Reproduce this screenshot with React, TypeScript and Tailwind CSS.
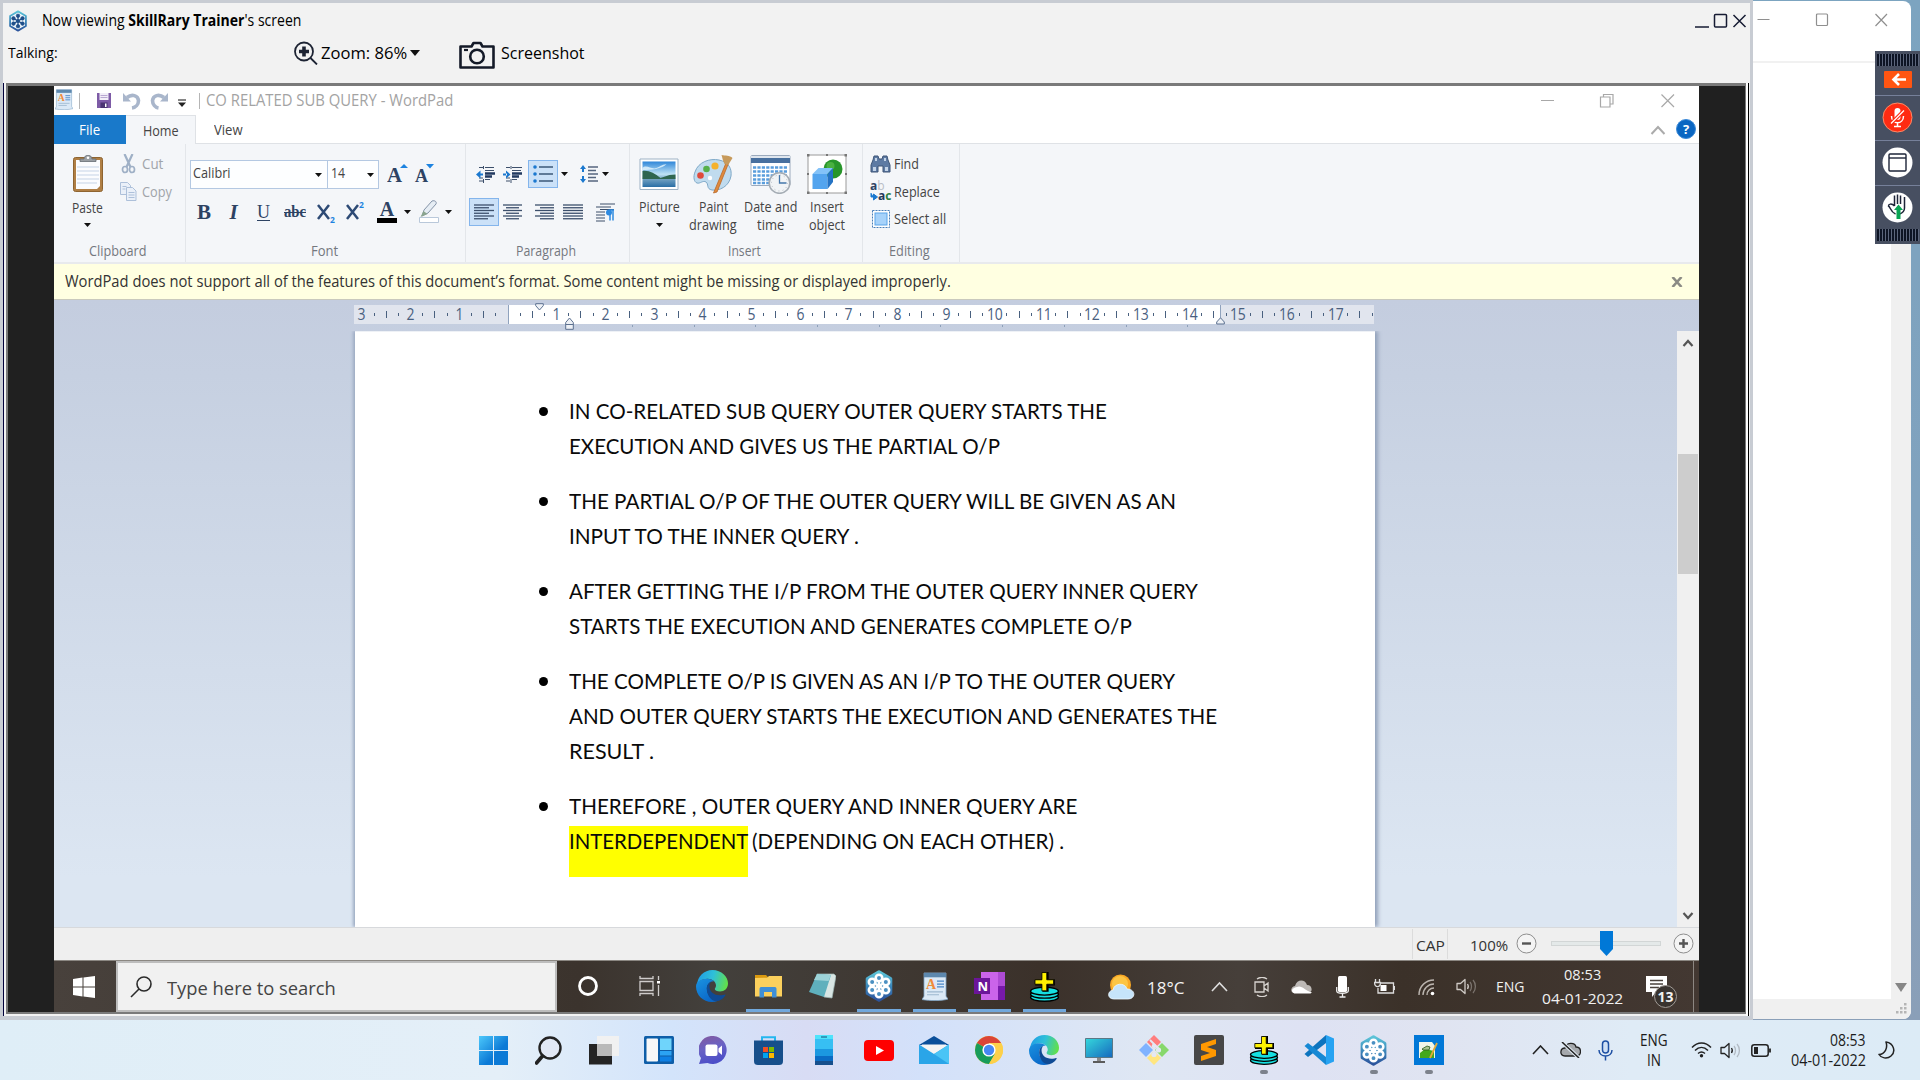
import React, { useLayoutEffect, useRef, useState } from "react";

type FitProps = { w: number; className?: string; children: React.ReactNode };

/* Single-line text squeezed or stretched to an exact width. */
function Fit({ w, className = "", children }: FitProps) {
  const ref = useRef<HTMLSpanElement>(null);
  const [s, setS] = useState(1);
  useLayoutEffect(() => {
    if (ref.current) setS(w / ref.current.offsetWidth);
  }, [w]);
  return (
    <span className={"block shrink-0 whitespace-nowrap text-left " + className} style={{ width: w }}>
      <span ref={ref} className="inline-block origin-left" style={{ transform: `scaleX(${s})` }}>
        {children}
      </span>
    </span>
  );
}

function Caret({ className = "" }: { className?: string }) {
  return (
    <svg className={"shrink-0 " + className} width="7" height="4" viewBox="0 0 7 4">
      <path d="M0 0h7L3.5 4z" fill="#111" />
    </svg>
  );
}

function Flower({ size, white = false }: { size: number; white?: boolean }) {
  const d = white ? 7.6 : 7.9;
  const pts = [0, 60, 120, 180, 240, 300].map((a) => {
    const r = ((a - 90) * Math.PI) / 180;
    return [16 + d * Math.cos(r), 16 + d * Math.sin(r)];
  });
  return (
    <svg width={size} height={size} viewBox="0 0 32 32" className="shrink-0">
      <defs>
        <linearGradient id="flw" x1="0" y1="0" x2="0" y2="1">
          <stop offset="0" stopColor="#5cc4d8" />
          <stop offset="0.55" stopColor="#3a83b8" />
          <stop offset="1" stopColor="#2c549c" />
        </linearGradient>
      </defs>
      <path d="M16 2 27.500 8.700v14.600L16 30 4.500 23.300V8.700z" fill={white ? "#f4fafd" : "url(#flw)"} stroke="url(#flw)" strokeWidth={white ? 2.6 : 3.6} strokeLinejoin="round" />
      {pts.map((p, i) => (
        <g key={i}>
          <path d={`M16 16L${p[0]} ${p[1]}`} stroke={white ? "#1f4f8a" : "#fff"} strokeWidth={white ? 1.8 : 2.2} />
          <circle cx={p[0]} cy={p[1]} r={white ? 2.6 : 3.3} fill={white ? "#1f4f8a" : "#4a90c2"} stroke={white ? "#1f4f8a" : "#fff"} strokeWidth={white ? 1 : 2.6} />
        </g>
      ))}
      <circle cx="16" cy="16" r="2.8" fill={white ? "#1f4f8a" : "#fff"} />
    </svg>
  );
}

function Edge({ size }: { size: number }) {
  return (
    <svg width={size} height={size} viewBox="0 0 32 32" className="shrink-0">
      <defs>
        <linearGradient id="eg1" x1="0" y1="0.3" x2="1" y2="0.5">
          <stop offset="0" stopColor="#1f9de6" />
          <stop offset="0.5" stopColor="#2fc0d8" />
          <stop offset="1" stopColor="#62e04a" />
        </linearGradient>
        <linearGradient id="eg2" x1="0" y1="0" x2="0.6" y2="1">
          <stop offset="0" stopColor="#1a93e0" />
          <stop offset="1" stopColor="#0a67c8" />
        </linearGradient>
      </defs>
      <path d="M1 15C1.500 6.500 8 0 16.500 0 25.500 0 32 6.500 32 13.500c0 5-3.700 8-8 8-3 0-5.200-1-5.200-2.400 0-1 1.200-1.600 1.200-3.600 0-3.600-3.500-6.800-8.500-6.800C6.500 8.700 2.200 11.500 1 15z" fill="url(#eg1)" />
      <path d="M0 16.500C0 11.500 5 8.700 11 8.700c3 0 5.500 1.200 7 2.600-4-.3-7.200 3.200-7.200 7.200 0 6.500 5.200 11.500 10.500 12.500C19.800 31.700 18 32 16 32 7 32 0 25 0 16.500z" fill="url(#eg2)" />
      <path d="M10.800 18.500c0-3.500 2-6.200 4.600-7-1.400 1.400-2 3-2 5 0 5 4.600 8.800 10.400 8.800 2.600 0 4.200-.8 5-.9.7 0 .9.500.5 1.100-1.800 2.700-4.800 5.600-9.300 5.800-5.600-.6-9.200-6.800-9.200-12.800z" fill="#0f4a94" />
    </svg>
  );
}

/* Yellow cross resting on stacked cyan discs. */
function PlusStack({ size }: { size: number }) {
  return (
    <svg width={size} height={size} viewBox="0 0 30 30" className="shrink-0">
      {[25.500, 22.500, 19.500].map((y) => (
        <ellipse key={y} cx="15" cy={y} rx="13.500" ry="3.800" fill="#16dfe0" stroke="#000" strokeWidth="1.300" />
      ))}
      <path d="M13 1h6v7h6v6h-6v6h-6v-6H6V8h7z" fill="#000" />
      <path d="M12.500 1.500h4.700v7h6.600v4.300h-6.600v6.400h-4.700v-6.400H5.800V8.500h6.700z" fill="#fff200" stroke="#000" strokeWidth="0.800" />
    </svg>
  );
}

function WordPadIcon({ w, h }: { w: number; h: number }) {
  return (
    <svg width={w} height={h} viewBox="0 0 26 30" preserveAspectRatio="none" className="shrink-0">
      <path d="M2 1h22v24l2 3c-6 2-18 2-26 .5L2 25z" fill="#dbe9f6" stroke="#7fa5c6" strokeWidth="0.800" />
      <path d="M2 1h22v4.500H2z" fill="#5d88ae" />
      <text x="4" y="17.500" fontFamily="Liberation Serif" fontWeight="bold" fontSize="14" fill="#f08c3a">A</text>
      <path d="M15 9.500h7M15 12.500h7M15 15.500h7" stroke="#4a86c8" strokeWidth="1.300" />
      <path d="M5 20.500h16M5 23.500h12" stroke="#9db8d0" strokeWidth="1.200" />
    </svg>
  );
}

function Speaker({ color, faint }: { color: string; faint: string }) {
  return (
    <svg width="21" height="17" viewBox="0 0 21 17" fill="none" strokeWidth="1.300" className="shrink-0">
      <path d="M1 5.500v6h3.500L9 15.500v-14L4.500 5.500z" stroke={color} strokeLinejoin="round" />
      <path d="M11.500 6c1 1.500 1 3.500 0 5" stroke={color} />
      <path d="M14 4c2 2.500 2 6.500 0 9M17 2c3.200 3.500 3.200 9.500 0 13" stroke={faint} />
    </svg>
  );
}

function Lines({ rows, w = 20 }: { rows: [number, number][]; w?: number }) {
  return (
    <svg width={w} height="16" viewBox={`0 0 ${w} 16`} className="shrink-0">
      {rows.map(([a, b], i) => (
        <path key={i} d={`M${a} ${1 + i * 2.750}H${b}`} stroke="#3c4f6b" strokeWidth="1.300" />
      ))}
    </svg>
  );
}

function Group({ className, label, labelW, children }: { className: string; label: string; labelW: number; children: React.ReactNode }) {
  return (
    <div className={"flex flex-col shrink-0 h-[118px] " + className}>
      <div className="h-[96px] shrink-0">{children}</div>
      <div className="h-5 flex items-center justify-center pr-[3px] text-[14px] text-[#74787f]">
        <Fit w={labelW}>{label}</Fit>
      </div>
    </div>
  );
}

function SharedHeader() {
  return (
    <div className="h-[80px] shrink-0 bg-[#f2f2f2] flex text-black">
      <div className="w-[1626px] shrink-0 flex flex-col">
        <div className="h-[36px] flex items-center pl-[4px]">
          <Flower size={22} white />
          <Fit w={259} className="ml-[13px] text-[15.500px]">
            Now viewing <b>SkillRary Trainer</b>'s screen
          </Fit>
        </div>
        <div className="h-[28px] flex items-center pl-[5px]">
          <Fit w={50} className="text-[14.500px]">Talking:</Fit>
          <svg width="24" height="24" viewBox="0 0 24 24" className="ml-[236px] shrink-0" fill="none" stroke="#1d2333">
            <circle cx="10" cy="10.500" r="9" strokeWidth="1.800" />
            <path d="M10 5.500v10M5 10.500h10" strokeWidth="3.600" />
            <path d="M16.500 17l6.500 6.500" strokeWidth="1.800" />
          </svg>
          <Fit w={86} className="ml-[3px] text-[16px]">Zoom: 86%</Fit>
          <svg width="10" height="6" viewBox="0 0 10 6" className="ml-[3px] shrink-0"><path d="M0 0h10L5 6z" fill="#111" /></svg>
          <svg width="36" height="28" viewBox="0 0 36 28" className="ml-[39px] mt-1 shrink-0" fill="none" stroke="#141a28" strokeWidth="2.600">
            <path d="M1.500 5.500h11l2-3.500h7l2 3.500h11V26.500h-33z" strokeLinejoin="round" />
            <ellipse cx="18" cy="15.500" rx="6.800" ry="6.800" />
            <path d="M5 9h4" strokeWidth="2.200" />
          </svg>
          <Fit w={84} className="ml-[6px] text-[16px]">Screenshot</Fit>
        </div>
      </div>
      <svg width="52" height="16" viewBox="0 0 52 16" className="ml-[66px] mt-[10px] shrink-0" fill="none" stroke="#161b33" strokeWidth="1.500">
        <path d="M0 14h14" />
        <rect x="19.500" y="1.500" width="12" height="12.500" rx="1" />
        <path d="M38.500 2l12 12M50.500 2l-12 12" />
      </svg>
    </div>
  );
}

function TitleBar() {
  return (
    <div className="h-[29px] shrink-0 flex items-center">
      <div className="ml-[1px] mt-[-3px]"><WordPadIcon w={18} h={21} /></div>
      <div className="w-px h-4 bg-[#b5b5b5] ml-[6px]" />
      <svg width="14" height="15" viewBox="0 0 14 15" className="ml-[17px] shrink-0">
        <path d="M0 0h14v15H0z" fill="#7d5ba6" />
        <path d="M2.500 0h9v7h-9z" fill="#f2eef8" />
        <path d="M3.500 2.500h7M3.500 4.500h7" stroke="#b9a8d2" />
        <path d="M3.500 9.500h7V15h-7z" fill="#4b3572" />
        <path d="M8 10.500h1.500V14H8z" fill="#fff" />
      </svg>
      <svg width="45" height="18" viewBox="0 0 45 18" className="ml-[12px] shrink-0" fill="none" stroke="#a9b6cb" strokeWidth="3.600">
        <path d="M4 5.500c5-4 11-2 11.500 3 0 4-3 7-6.500 7.500" />
        <path d="M0 1v8.500h8z" fill="#a9b6cb" stroke="none" />
        <path d="M41 5.500c-5-4-11-2-11.500 3 0 4 3 7 6 7.500" />
        <path d="M45 1v8.500h-8z" fill="#a9b6cb" stroke="none" />
      </svg>
      <svg width="8" height="8" viewBox="0 0 8 8" className="ml-[10px] mt-1 shrink-0"><path d="M0 1h8" stroke="#333" strokeWidth="1.200" /><path d="M0 3.500h8L4 8z" fill="#222" /></svg>
      <div className="w-px h-4 bg-[#b5b5b5] ml-[13px]" />
      <Fit w={247} className="ml-[6px] mt-px text-[15.500px] text-[#a3a3a3]">CO RELATED SUB QUERY - WordPad</Fit>
      <svg width="134" height="16" viewBox="0 0 134 16" className="ml-[1088px] shrink-0" fill="none" stroke="#a8a8a8" strokeWidth="1.200">
        <path d="M0 7.500h13M120.500 1.500l12.500 12.500M133 1.500l-12.500 12.500" />
        <path d="M59.500 4h9.500v10h-9.500zM62.500 4V1.500h9.500v9.500h-3" />
      </svg>
    </div>
  );
}

function Tabs() {
  return (
    <div className="h-[29px] shrink-0 flex border-b border-[#dfe2e6] text-[14px] text-[#444]">
      <div className="w-[72px] h-[29px] bg-[#1979ca] flex items-center justify-center pr-[2px] text-white"><Fit w={21}>File</Fit></div>
      <div className="w-[70px] h-[29px] bg-[#f4f6f9] border-t border-r border-[#dfe2e6] flex items-center justify-center"><Fit w={36}>Home</Fit></div>
      <div className="w-[64px] flex items-center pl-[18px]"><Fit w={29}>View</Fit></div>
      <svg width="16" height="10" viewBox="0 0 16 10" className="ml-[1390px] mt-[10px] shrink-0"><path d="M1.500 9L8 2l6.500 7" fill="none" stroke="#ababab" strokeWidth="2" /></svg>
      <div className="ml-[10px] mt-[4px] size-[20px] shrink-0 rounded-full bg-[#0a66c2] border border-[#3c8ad8] text-white font-bold text-[13px] leading-[18px] text-center">?</div>
    </div>
  );
}

function Ribbon() {
  return (
    <div className="h-[118px] shrink-0 bg-[#f4f6f9] flex text-[14px] text-[#444]">
      <Group className="w-[131px]" label="Clipboard" labelW={58}>
        <div className="flex">
          <div className="ml-[18px] w-[31px] pt-[11px] flex flex-col items-center">
            <svg width="30" height="37" viewBox="0 0 30 37" className="shrink-0">
              <rect x="0.500" y="2.500" width="29" height="34" rx="2" fill="#b07f45" stroke="#8e6431" />
              <path d="M3 5h24v26l-3 3H3z" fill="#fbfcfe" />
              <path d="M4 12h22M4 16h22M4 20h22M4 24h22M4 28h20" stroke="#c5d3e6" />
              <path d="M7 6.500V4h4c0-5 8-5 8 0h4v2.500z" fill="#999ea3" stroke="#666c72" strokeWidth="0.800" />
              <circle cx="15" cy="2.800" r="1.300" fill="#fff" />
            </svg>
            <Fit w={31} className="mt-[6px] h-5 leading-5">Paste</Fit>
            <Caret className="mt-[5px]" />
          </div>
          <div className="ml-[17px] pt-[6px] text-[#a0a4a9]">
            <div className="h-[27px] flex items-center">
              <svg width="16" height="20" viewBox="0 0 16 20" className="shrink-0 ml-px" fill="none" stroke="#9fb0c6">
                <path d="M3.500 0l6 13M11.500 0l-6 13" strokeWidth="2.200" />
                <ellipse cx="4" cy="15.500" rx="2.500" ry="3" strokeWidth="1.700" /><ellipse cx="11" cy="15.500" rx="2.500" ry="3" strokeWidth="1.700" />
              </svg>
              <Fit w={21} className="ml-[5px]">Cut</Fit>
            </div>
            <div className="h-[28px] flex items-center">
              <svg width="17" height="19" viewBox="0 0 17 19" className="shrink-0" fill="#eaf0f9" stroke="#adc0da">
                <path d="M.5.500h7l3 3v9H.5z" /><path d="M6.500 5.500h6l3.500 3.500v9.500H6.500z" /><path d="M8.500 10.500h6M8.500 13h6M8.500 15.500h6M2.500 4.500h4M2.500 7h3" />
              </svg>
              <Fit w={30} className="ml-[5px]">Copy</Fit>
            </div>
          </div>
        </div>
      </Group>

      <Group className="w-[280px] border-l border-[#e3e6ea]" label="Font" labelW={27}>
        <div className="pt-[16px]">
          <div className="flex h-[29px] items-start">
            <div className="ml-[4px] w-[138px] h-[29px] bg-[#fdfeff] border border-[#b4c8e2] flex items-center justify-between pl-[2px] pr-[5px]">
              <Fit w={38} className="mt-[-5px]">Calibri</Fit><Caret />
            </div>
            <div className="ml-[-1px] w-[52px] h-[29px] bg-[#fdfeff] border border-[#b4c8e2] flex items-center justify-between pl-[3px] pr-[4px]">
              <Fit w={14} className="mt-[-5px]">14</Fit><Caret />
            </div>
            <svg width="50" height="26" viewBox="0 0 50 26" className="ml-[8px] shrink-0" fill="#2d4263">
              <text x="0" y="22" fontFamily="Liberation Serif" fontWeight="bold" fontSize="22" textLength="15" lengthAdjust="spacingAndGlyphs">A</text>
              <path d="M13 8h8l-4-4z" fill="#1d83e0" />
              <text x="28" y="22" fontFamily="Liberation Serif" fontWeight="bold" fontSize="18" textLength="13" lengthAdjust="spacingAndGlyphs">A</text>
              <path d="M39 4h8l-4 4.500z" fill="#1d83e0" />
            </svg>
          </div>
          <div className="mt-[9px] ml-[3px] flex h-[28px] items-center text-[#2d4263] font-['Liberation_Serif',serif] text-[21px] leading-none text-center">
            <span className="w-[30px] font-bold">B</span>
            <span className="w-[29px] italic font-bold">I</span>
            <span className="w-[31px] underline underline-offset-2 text-[18px]">U</span>
            <span className="w-[32px] flex justify-center"><Fit w={22} className="font-bold text-[16px]"><span className="line-through">abc</span></Fit></span>
            <svg width="59" height="26" viewBox="0 0 59 26" className="shrink-0" fill="none" stroke="#2d4a75" strokeWidth="2.500">
              <path d="M7 6l11 14M18 6L7 20M36 6l11 14M47 6L36 20" />
              <text x="19" y="24" fontFamily="Open Sans" fontWeight="bold" fontSize="8.500" fill="#1d83e0" stroke="none">2</text>
              <text x="48" y="9" fontFamily="Open Sans" fontWeight="bold" fontSize="8.500" fill="#1d83e0" stroke="none">2</text>
            </svg>
            <span className="w-[34px] flex flex-col items-center">
              <span className="h-[17px] text-[20px] leading-[17px] font-bold">A</span>
              <span className="w-5 h-[5px] bg-black" />
            </span>
            <Caret />
            <svg width="34" height="24" viewBox="0 0 34 24" className="shrink-0">
              <path d="M8.500 17.500h19v5h-19z" fill="#fff" stroke="#b9c8da" />
              <path d="M11 16l2-6 8-9c3-1 5 1 4 3l-8 9z" fill="#e6edf4" stroke="#8493a8" /><path d="M9.500 17l3-6 4 3z" fill="#8ba58f" />
            </svg>
            <Caret />
          </div>
        </div>
      </Group>

      <Group className="w-[164px] border-l border-[#e3e6ea]" label="Paragraph" labelW={60}>
        <div className="pt-[16px]">
          <div className="flex h-[28px] items-center">
            <svg width="46" height="17" viewBox="0 0 46 17" className="ml-[10px] shrink-0" fill="none" stroke="#3c4f6b">
              <path d="M3 1.500h4M9 1.500h9M3 15h4M9 13.500h5M9 4.500h9M3 12h4" strokeWidth="1.200" />
              <path d="M9 7.500h10M9 10.500h7" stroke="#223a60" strokeWidth="2.400" />
              <path d="M7.500 0v3M7.500 13v4" />
              <path d="M0 8.500l4.500-4v8zM4 7.500h3v2H4z" fill="#1b78cf" stroke="none" />
              <path d="M30 1.500h4M36 1.500h10M30 15h4M36 13.500h5M36 4.500h9M30 12h4" strokeWidth="1.200" />
              <path d="M36 7.500h10M36 10.500h7" stroke="#223a60" strokeWidth="2.400" />
              <path d="M35 0v3M35 13v4" />
              <path d="M34.500 8.500l-4.500-4v8zM27 7.500h4v2h-4z" fill="#1b78cf" stroke="none" />
            </svg>
            <div className="ml-[6px] w-[30px] h-[28px] bg-[#cbe1f8] border border-[#84b5ec] flex items-center justify-center">
              <svg width="20" height="18" viewBox="0 0 20 18"><path d="M6 2h14M6 9h14M6 16h14" stroke="#3c5878" strokeWidth="1.400" /><circle cx="2" cy="2" r="1.800" fill="#1b78cf" /><circle cx="2" cy="9" r="1.800" fill="#1b78cf" /><circle cx="2" cy="16" r="1.800" fill="#1b78cf" /></svg>
            </div>
            <Caret className="ml-[3px]" />
            <svg width="18" height="20" viewBox="0 0 18 20" className="ml-[12px] shrink-0"><path d="M8 3h10M8 6.500h8M8 10h10M8 13.500h8M8 17h10" stroke="#55667f" strokeWidth="1.300" /><path d="M3 1l3 4H4v3H2V5H0zM3 19l3-4H4v-3H2v3H0z" fill="#1b78cf" /></svg>
            <Caret className="ml-[4px]" />
          </div>
          <div className="mt-[10px] flex h-[28px] items-center">
            <div className="ml-[3px] w-[30px] h-[28px] bg-[#cbe1f8] border border-[#84b5ec] flex items-center justify-center">
              <Lines rows={[[0, 20], [0, 15], [0, 20], [0, 15], [0, 20], [0, 14]]} />
            </div>
            <div className="ml-[4px]"><Lines rows={[[0, 19], [3, 16], [0, 19], [3, 16], [0, 19], [3, 16]]} /></div>
            <div className="ml-[12px]"><Lines w={19} rows={[[0, 19], [5, 19], [0, 19], [5, 19], [0, 19], [5, 19]]} /></div>
            <div className="ml-[9px]"><Lines rows={[[0, 20], [0, 20], [0, 20], [0, 20], [0, 20], [0, 20]]} /></div>
            <svg width="19" height="19" viewBox="0 0 19 19" className="ml-[13px] shrink-0"><path d="M4 1h15M0 4h15M4 6.500h14M0 9h9M0 12h9M0 15h9M0 18h9" stroke="#3c4f6b" strokeWidth="1.200" /><path d="M17 6.500v11M14 6.500v11M18 7h-4" stroke="#2e8ae0" strokeWidth="1.500" /><circle cx="13" cy="9.500" r="3" fill="#2e8ae0" /></svg>
          </div>
        </div>
      </Group>

      <Group className="w-[233px] border-l border-[#e3e6ea]" label="Insert" labelW={33}>
        <div className="pt-[10px] flex text-center">
          <div className="ml-[9px] w-[40px] flex flex-col items-center">
            <svg width="40" height="40" viewBox="0 0 40 40" className="shrink-0">
              <defs><linearGradient id="sky" x1="0" y1="0" x2="0" y2="1"><stop offset="0" stopColor="#2f86d8" /><stop offset="0.500" stopColor="#bfe3f6" /><stop offset="0.700" stopColor="#6f9fc0" /><stop offset="1" stopColor="#2a6ea5" /></linearGradient></defs>
              <path d="M1 5h38v30.500H1z" fill="#fff" stroke="#9fb3c5" /><path d="M3.500 7.500h33v25.500h-33z" fill="url(#sky)" />
              <path d="M3.500 17c6-1 12 2 18 7l9-3 6-.5V25H3.500z" fill="#2f6650" /><path d="M3.500 14c4-4 9 2 14 0s4-3 10-4c-4 5-16 6-24 6z" fill="#e6f5fc" opacity="0.800" />
            </svg>
            <Fit w={41} className="mt-[4px] h-[18px] leading-[18px]">Picture</Fit>
            <Caret className="mt-[7px]" />
          </div>
          <div className="ml-[10px] w-[48px] flex flex-col items-center">
            <svg width="42" height="40" viewBox="0 0 42 40" className="shrink-0">
              <path d="M3 18C6 8 18 4 27 6c10 2 13 9 12 16-2 11-12 15-19 14-6-1-3-6-6-8s-6 2-9 1-4-6-2-11z" fill="#c0dbee" stroke="#7fa9c8" />
              <circle cx="8.500" cy="21.500" r="3.300" fill="#df4a3b" /><circle cx="14.500" cy="15" r="3.300" fill="#55b04b" /><circle cx="23" cy="12" r="3.600" fill="#f5b22d" /><circle cx="18" cy="24" r="2.200" fill="#fff" />
              <path d="M34 9l2 1.500L25 38l-3.500 1z" fill="#e08a3c" stroke="#b8682a" strokeWidth="0.800" /><path d="M32.500 10c-2-4-2-6-3-9 4 1 8 0 11 3-1 2-3 4-4 7z" fill="#c79a5b" />
            </svg>
            <Fit w={29} className="mt-[4px] h-[18px] leading-[18px]">Paint</Fit>
            <Fit w={48} className="h-[18px] leading-[18px]">drawing</Fit>
          </div>
          <div className="ml-[7px] w-[53px] flex flex-col items-center">
            <svg width="42" height="40" viewBox="0 0 42 40" className="shrink-0">
              <rect x="1" y="1.500" width="39" height="30" rx="1" fill="#fff" stroke="#9baabd" /><path d="M1 2h39v7H1z" fill="#48709f" /><path d="M1 2h39v2H1z" fill="#dfe6ee" />
              <path d="M3 13.500h35M3 17.500h35M3 21.500h35M3 25.500h35M3 29h35" stroke="#5a9ddc" strokeWidth="2.600" strokeDasharray="3.200 1.200" />
              <circle cx="29.500" cy="29" r="10.300" fill="#f1f4f6" stroke="#a5adb5" strokeWidth="1.600" /><path d="M29.500 21v8h7" stroke="#4477aa" strokeWidth="1.300" fill="none" /><circle cx="29.500" cy="29" r="8" fill="none" stroke="#b5bcc4" strokeDasharray="1 3.190" />
            </svg>
            <Fit w={53} className="mt-[4px] h-[18px] leading-[18px]">Date and</Fit>
            <Fit w={27} className="h-[18px] leading-[18px]">time</Fit>
          </div>
          <div className="ml-[10px] w-[40px] flex flex-col items-center">
            <svg width="40" height="40" viewBox="0 0 40 40" className="shrink-0">
              <path d="M1 1h38v38H1z" fill="#fff" stroke="#9a9a9a" /><circle cx="26" cy="15" r="9.500" fill="#27952a" /><circle cx="23.500" cy="12" r="4" fill="#59bd4a" opacity="0.700" />
              <path d="M5.500 20h15v15h-15z" fill="#53a4ee" /><path d="M5.500 20l6-6H26l-5.500 6z" fill="#83c2f8" /><path d="M20.500 20l5.500-6v14l-5.500 7z" fill="#2573c4" />
              <path d="M0 0h2.500v2.500H0zM37.500 0H40v2.500h-2.500zM0 37.500h2.500V40H0zM37.500 37.500H40V40h-2.500zM19 0h2v2h-2zM19 38h2v2h-2zM0 19h2v2H0zM38 19h2v2h-2z" fill="#777" />
            </svg>
            <Fit w={34} className="mt-[4px] h-[18px] leading-[18px]">Insert</Fit>
            <Fit w={36} className="h-[18px] leading-[18px]">object</Fit>
          </div>
        </div>
      </Group>

      <Group className="w-[98px] border-x border-[#e3e6ea]" label="Editing" labelW={41}>
        <div className="pt-[6px] pl-[7px]">
          <div className="h-[27px] flex items-center">
            <svg width="21" height="18" viewBox="0 0 21 18" className="shrink-0"><path d="M4 1h4l1 3h3l1-3h4l1 4 2 5v7h-7v-6H8v6H1v-7l2-5z" fill="#5d7aa3" stroke="#3e5577" /><path d="M3 12h3v4H3zM15 12h3v4h-3zM5 3h2v3H5zM14 3h2v3h-2z" fill="#c4d4e8" /></svg>
            <Fit w={25} className="ml-[3px]">Find</Fit>
          </div>
          <div className="h-[28px] flex items-center">
            <svg width="22" height="26" viewBox="0 -3 22 26" className="shrink-0" fontFamily="Open Sans" fontWeight="bold" fontSize="12">
              <text x="0" y="8.500" fill="#2d4263">a<tspan fill="#b9bec6" fontWeight="normal">b</tspan></text>
              <text x="8" y="18.500" fill="#23395b">a<tspan fill="#2d8044">c</tspan></text>
              <path d="M1 12v4h3M3.500 13l4 3-4 3z" fill="#1b78cf" stroke="#1b78cf" />
            </svg>
            <Fit w={46} className="ml-[2px]">Replace</Fit>
          </div>
          <div className="h-[27px] flex items-center">
            <svg width="21" height="18" viewBox="0 0 21 18" className="shrink-0"><rect x="2.500" y="0.500" width="17" height="17" fill="#fff" stroke="#4a7fb8" strokeDasharray="2 1" /><rect x="5" y="3" width="12" height="12" fill="#a6d2fa" stroke="#5ba4e8" /></svg>
            <Fit w={52} className="ml-[3px]">Select all</Fit>
          </div>
        </div>
      </Group>
    </div>
  );
}

function Ruler() {
  const cells = Array.from({ length: 84 }, (_, i) => i - 12);
  return (
    <div className="relative h-[31px] shrink-0 pt-[5px] pl-[300px]">
      <div className="w-[1020px] h-[19px] flex items-center pl-[1.800px] overflow-hidden text-[15.500px] leading-none text-[#49607f] bg-[linear-gradient(to_right,#e1e5ee_154px,#8fa2bd_154px,#8fa2bd_155px,#fff_155px,#fff_866px,#8fa2bd_866px,#8fa2bd_867px,#e1e5ee_867px)]">
        {cells.map((c) => (
          <span key={c} className="w-[12.175px] shrink-0 flex justify-center">
            {c === 0 ? null : c % 4 === 0 ? (
              <span className="mt-px scale-x-90">{Math.abs(c / 4)}</span>
            ) : c % 2 === 0 ? (
              <span className="w-px h-[7px] bg-[#49607f]" />
            ) : (
              <span className="w-px h-[3px] bg-[#49607f]" />
            )}
          </span>
        ))}
      </div>
      <div className="flex gap-[60.700px] pl-[278px] pt-px">
        {cells.slice(0, 10).map((c) => (
          <span key={c} className="w-px h-[2px] bg-[#8da0b9]" />
        ))}
      </div>
      <svg width="9" height="8" viewBox="0 0 9 8" className="absolute left-[481px] top-[3px]"><path d="M.7.700h7.600v2L4.500 7 .7 2.700z" fill="#eef1f6" stroke="#5c7190" /></svg>
      <svg width="9" height="13" viewBox="0 0 9 13" className="absolute left-[511px] top-[17px]"><path d="M.7 5.500L4.500 1l3.800 4.500v6.800H.7zM.7 7.500h7.600" fill="#eef1f6" stroke="#5c7190" /></svg>
      <svg width="9" height="8" viewBox="0 0 9 8" className="absolute left-[1162px] top-[17px]"><path d="M.7 5L4.500.8 8.300 5v2H.7z" fill="#eef1f6" stroke="#5c7190" /></svg>
    </div>
  );
}

const paragraphs: [string, number][][] = [
  [["IN CO-RELATED SUB QUERY OUTER QUERY STARTS THE", 538], ["EXECUTION AND GIVES US THE PARTIAL O/P", 431]],
  [["THE PARTIAL O/P OF THE OUTER QUERY WILL BE GIVEN AS AN", 607], ["INPUT TO THE INNER QUERY .", 290]],
  [["AFTER GETTING THE I/P FROM THE OUTER QUERY INNER QUERY", 629], ["STARTS THE EXECUTION AND GENERATES COMPLETE O/P", 563]],
  [["THE COMPLETE O/P IS GIVEN AS AN I/P TO THE OUTER QUERY", 606], ["AND OUTER QUERY STARTS THE EXECUTION AND GENERATES THE", 648], ["RESULT .", 85]],
  [["THEREFORE , OUTER QUERY AND INNER QUERY ARE", 508]],
];

function Document() {
  return (
    <div className="h-[596px] shrink-0 flex">
      <div className="ml-[301px] w-[1020px] bg-white border-t border-[#eef1f6] shadow-[3px_0_4px_#93a2bb,-2px_0_3px_#9fadc4] [clip-path:inset(0_-8px_0_-8px)] pt-[62px] pl-[184px] font-['Lato',sans-serif] text-[21.500px] text-[#0a0a0a]">
        {paragraphs.map((p, i) => (
          <div key={i} className={i < 4 ? "flex mb-[19.500px]" : "flex"}>
            <span className="w-[9px] h-[9px] rounded-full bg-black mt-[13px] mr-[21px]" />
            <div>
              {p.map(([t, w]) => (
                <Fit key={t} w={w} className="h-[35.200px] leading-[35.200px]">{t}</Fit>
              ))}
              {i === 4 && (
                <div className="flex mt-[2px] leading-[31px]">
                  <span className="h-[51px] bg-[#ffff00]"><Fit w={179}>INTERDEPENDENT</Fit></span>
                  <Fit w={312} className="ml-[4px]">(DEPENDING ON EACH OTHER) .</Fit>
                </div>
              )}
            </div>
          </div>
        ))}
      </div>
      <div className="ml-[302px] w-[22px] bg-[#f0f0f0] flex flex-col items-center">
        <svg width="12" height="8" viewBox="0 0 12 8" className="mt-[8px] shrink-0"><path d="M1.500 7L6 2l4.500 5" fill="none" stroke="#555" strokeWidth="2.200" /></svg>
        <div className="mt-[107px] w-[20px] h-[120px] shrink-0 bg-[#cdcdcd]" />
        <svg width="12" height="8" viewBox="0 0 12 8" className="mt-auto mb-[7px] shrink-0"><path d="M1.500 1L6 6l4.500-5" fill="none" stroke="#555" strokeWidth="2.200" /></svg>
      </div>
    </div>
  );
}

function StatusBar() {
  return (
    <div className="h-[33px] shrink-0 bg-[#efefef] border-t border-[#d7d9dc] flex items-center text-[15px] text-[#333]">
      <div className="ml-[1358px] w-[36px] h-[30px] border-x border-[#dcdcdc] flex items-center justify-center pt-[3px]"><Fit w={29}>CAP</Fit></div>
      <Fit w={38} className="ml-[22px] mt-[3px]">100%</Fit>
      <svg width="21" height="21" viewBox="0 0 21 21" className="ml-[8px] mt-[-2px] shrink-0"><circle cx="10.500" cy="10.500" r="9.500" fill="#f4f4f4" stroke="#8e8e8e" /><path d="M6 10.500h9" stroke="#555" strokeWidth="2.400" /></svg>
      <div className="ml-[14px] w-[110px] h-[5px] mt-[-2px] bg-[#e4e9e9] border border-[#d2d6d6] flex items-center justify-center">
        <svg width="13" height="25" viewBox="0 0 13 25" className="shrink-0"><path d="M0 0h13v18l-6.500 7L0 18z" fill="#0078d7" /></svg>
      </div>
      <svg width="21" height="21" viewBox="0 0 21 21" className="ml-[12px] mt-[-2px] shrink-0"><circle cx="10.500" cy="10.500" r="9.500" fill="#f4f4f4" stroke="#8e8e8e" /><path d="M6 10.500h9M10.500 6v9" stroke="#555" strokeWidth="2.400" /></svg>
    </div>
  );
}

function Slot({ className, children }: { className: string; children: React.ReactNode }) {
  return <div className={"h-full shrink-0 flex items-center justify-center border-b-[3px] pt-[2px] " + className}>{children}</div>;
}

function RemoteTaskbar() {
  return (
    <div className="h-[52px] shrink-0 border-t border-[#8b8782] flex items-center text-[15px] text-[#f1f1f1] bg-[linear-gradient(to_right,#48413c,#3b332d_32%,#43403c_40%,#3b312a_60%,#463f3a_72%,#3b3129_82%,#433832)]">
      <div className="w-[62px] shrink-0 flex justify-center pr-[2px]">
        <svg width="22" height="22" viewBox="0 0 22 22"><path d="M0 3l9.500-1.400v8.900H0zM10.500 1.400L22 0v10.500H10.500zM0 11.500h9.500v8.900L0 19zM10.500 11.500H22V22l-11.500-1.500z" fill="#fff" /></svg>
      </div>
      <div className="w-[441px] h-full shrink-0 bg-[#f1f1f1] border-2 border-[#bdbdbd] flex items-center">
        <svg width="22" height="22" viewBox="0 0 22 22" className="ml-[12px] shrink-0" fill="none" stroke="#2b2b2b" strokeWidth="1.600"><circle cx="14" cy="8" r="7" /><path d="M9 13l-8 8" /></svg>
        <Fit w={169} className="ml-[15px] mt-[3px] text-[19px] text-[#444]">Type here to search</Fit>
      </div>
      <Slot className="w-[62px] border-transparent"><svg width="22" height="22" viewBox="0 0 22 22"><circle cx="11" cy="11" r="8.500" fill="none" stroke="#fff" strokeWidth="2.800" /></svg></Slot>
      <Slot className="w-[62px] border-transparent">
        <svg width="22" height="22" viewBox="0 0 22 22" fill="none" stroke="#cfcccb" strokeWidth="1.300"><path d="M1 1v2.500h13V1M1 6.500h13v9H1zM1 21v-2.500h13V21M19.500 1v4M19.500 10v11" /><path d="M18 6h3v2.500h-3z" fill="#fff" stroke="none" /></svg>
      </Slot>
      <Slot className="w-[62px] border-transparent"><Edge size={32} /></Slot>
      <Slot className="ml-[3px] w-[44px] border-[#71a8dc]">
        <svg width="29" height="25" viewBox="0 0 29 25"><path d="M1 1h11l3 3h-3L1 6z" fill="#d9980f" /><path d="M1 4l12-.3 2-1.700h13v20.500H1z" fill="#fbd05d" /><path d="M5.500 23.500V15c0-1.500 1-2 2-2h13c1 0 2 .5 2 2v8.500h-4.500V18h-8v5.500z" fill="#3f8fd6" /></svg>
      </Slot>
      <Slot className="w-[64px] border-transparent">
        <svg width="28" height="28" viewBox="0 0 28 28"><path d="M9 2h17l2 2-4 22-8-1z" fill="#d9e6e4" stroke="#9db8b6" strokeWidth="0.700" /><path d="M9 2l14 1-7 22L1 20z" fill="#5fb0bd" /><path d="M9 2l14 1-2.500 6L6 8z" fill="#9dd3d8" /></svg>
      </Slot>
      <Slot className="ml-[3px] w-[44px] border-[#71a8dc]"><Flower size={32} /></Slot>
      <Slot className="ml-[12px] w-[43px] border-[#71a8dc] border-r-[#71a8dc]"><WordPadIcon w={26} h={29} /></Slot>
      <Slot className="ml-[12px] w-[43px] border-[#71a8dc]">
        <svg width="31" height="28" viewBox="0 0 31 28"><path d="M7 0h24v28H7z" fill="#ca64ea" /><path d="M24 0h7v14h-7z" fill="#ae4bd5" /><path d="M24 14h7v14h-7z" fill="#7719aa" /><path d="M0 6h16v16H0z" fill="#6b1599" /><text x="3.500" y="19" fontFamily="Open Sans" fontWeight="bold" fontSize="13" fill="#fff">N</text></svg>
      </Slot>
      <Slot className="ml-[12px] w-[43px] border-[#71a8dc]"><PlusStack size={31} /></Slot>
      <svg width="27" height="26" viewBox="0 0 27 26" className="ml-[42px] shrink-0"><circle cx="12.500" cy="11" r="10.500" fill="#f9a825" /><circle cx="12" cy="10" r="8" fill="#fcc544" /><path d="M6 25c-7 0-7-8-1-9 1-7 12-8 14-1 9 0 9 10 1 10z" fill="#c6e4fa" stroke="#eef8ff" strokeWidth="0.800" /></svg>
      <Fit w={37} className="ml-[12px] mt-[3px] text-[17px]">18°C</Fit>
      <svg width="17" height="11" viewBox="0 0 17 11" className="ml-[27px] shrink-0"><path d="M1 10l7.500-8 7.500 8" fill="none" stroke="#ddd" strokeWidth="1.600" /></svg>
      <svg width="16" height="20" viewBox="0 0 16 20" className="ml-[26px] shrink-0" fill="none" stroke="#d8d4d0" strokeWidth="1.300"><path d="M1 5h9v10H1zM10 9l4-3v8l-4-3M3 2c3-2 7-2 10 0M3 18c3 2 7 2 10 0" /></svg>
      <svg width="21" height="14" viewBox="0 0 21 14" className="ml-[21px] shrink-0"><path d="M4 13c-5 0-5-6 0-7C6-1 14-1 16 5c6 0 6 8 1 8z" fill="#bdb9b6" /><path d="M5 13.500c-4 0-6-4-1-6l4-1c4 0 6 4 13 6-1 1-2 1-4 1z" fill="#fff" /></svg>
      <svg width="13" height="22" viewBox="0 0 13 22" className="ml-[24px] shrink-0"><rect x="2" y="0" width="9" height="16" rx="1.500" fill="#fff" /><path d="M.7 11v4c0 3 11.600 3 11.600 0v-4M6.500 17v4M3.500 21h6" fill="none" stroke="#eee" strokeWidth="1.300" /></svg>
      <svg width="21" height="16" viewBox="0 0 21 16" className="ml-[25px] shrink-0" fill="none" stroke="#ddd" strokeWidth="1.300"><path d="M7 4h12.500v10H4V9M20.500 7v4M1.500 0v3M5.500 0v3M.5 3.500h6C6.500 9 .5 9 .5 3.500z" /><path d="M6.500 6h6v6h-6z" fill="#fff" stroke="none" /></svg>
      <svg width="17" height="17" viewBox="0 0 17 17" className="ml-[23px] mt-[2px] shrink-0" fill="none" stroke="#bbb5af" strokeWidth="1.400"><path d="M1 16C1 7 8 1 16 1M5 16C5 10 10 5 16 5M9 16c0-4 3-7 7-7" /><circle cx="14.500" cy="14.500" r="1.800" fill="#fff" stroke="none" /></svg>
      <div className="ml-[21px]"><Speaker color="#cfcac5" faint="#7a736d" /></div>
      <Fit w={29} className="ml-[19px]">ENG</Fit>
      <div className="ml-[17px] w-[81px] shrink-0 flex flex-col items-center leading-6 pb-[1px]"><Fit w={37}>08:53</Fit><Fit w={81}>04-01-2022</Fit></div>
      <div className="relative ml-[23px] w-[32px] h-[34px] shrink-0">
        <svg width="22" height="22" viewBox="0 0 22 22" className="mt-[6px]"><path d="M0 0h21v16H10l-4 5v-5H0z" fill="#fff" /><path d="M4 4.500h13M4 8h13M4 11.500h9" stroke="#4a423c" strokeWidth="1.300" /></svg>
        <span className="absolute left-[8px] top-[15px] size-[23px] rounded-full bg-[#39332f] border border-[#a09a95] text-[14px] font-bold leading-[21px] text-center">13</span>
      </div>
      <div className="ml-[15px] h-full w-px bg-[#8d8782]" />
    </div>
  );
}

function WordPad() {
  return (
    <div className="w-[1645px] shrink-0 flex flex-col bg-white">
      <TitleBar />
      <Tabs />
      <Ribbon />
      <div className="h-[38px] shrink-0 bg-[#ffffe1] border-t-2 border-b border-t-[#e8eaed] border-b-[#c9c9bd] flex items-center text-[15.500px] text-[#333]">
        <Fit w={886} className="ml-[11px] mt-px">WordPad does not support all of the features of this document’s format. Some content might be missing or displayed improperly.</Fit>
        <svg width="12" height="10" viewBox="0 0 12 10" className="ml-[720px] shrink-0"><path d="M1.500 0l9 10M10.500 0l-9 10" stroke="#8b8b84" strokeWidth="2.600" /></svg>
      </div>
      <div className="flex flex-col bg-[linear-gradient(to_bottom,#c4cddf,#c6d0e1_12%,#dce6f2_92%)]">
        <Ruler />
        <Document />
      </div>
      <StatusBar />
      <RemoteTaskbar />
    </div>
  );
}

function SharedWindow() {
  return (
    <div className="w-[1753px] shrink-0 bg-[#c8ccd3] pt-[3px] pl-[3px] pr-[3px] pb-[4px]">
      <div className="h-[1013px] flex flex-col bg-[#f2f2f2]">
        <SharedHeader />
        <div className="h-[933px] border-l border-[#00003a] flex">
          <div className="ml-[2px] w-[1740px] h-[931px] flex bg-[#202020] border-t-[3px] border-[#7a7a7a] border-l-2 border-r border-b-2">
            <div className="w-[46px] shrink-0" />
            <WordPad />
          </div>
          <div className="w-[2px] bg-white" />
          <div className="w-px bg-black" />
        </div>
      </div>
    </div>
  );
}

function ToolStrip() {
  const bars = "mx-[2px] h-[12px] w-[42px] shrink-0 bg-[repeating-linear-gradient(to_right,#0d1424_0_2px,#5c667c_2px_3px)]";
  return (
    <div className="absolute left-[122px] top-[51px] w-[45px] h-[193px] bg-[#474f61] flex flex-col items-center pt-[3px]">
      <div className={bars} />
      <div className="w-full h-[30px] pb-[2px] border-b border-[#76809a] flex items-center justify-center shrink-0">
        <svg width="28" height="17" viewBox="0 0 28 17"><rect width="28" height="17" rx="1" fill="#ff5512" /><path d="M22 8.500H10M15 3L9.500 8.500 15 14" fill="none" stroke="#fff" strokeWidth="2.600" /></svg>
      </div>
      <div className="w-full h-[45px] pb-px border-b border-[#76809a] flex items-center justify-center shrink-0">
        <svg width="31" height="31" viewBox="0 0 31 31"><circle cx="15.500" cy="15.500" r="14.500" fill="#ff2b12" stroke="#ff8a66" /><rect x="12.500" y="6" width="6" height="12" rx="3" fill="#fff" /><path d="M9.500 14c0 9 12 9 12 0M15.500 21v3M12 24.500h7" fill="none" stroke="#fff" strokeWidth="1.500" /><path d="M22.500 8L9 21.500" stroke="#ff2b12" strokeWidth="3.500" /><path d="M22 8.500L9 21.500" stroke="#fff" strokeWidth="1.300" /></svg>
      </div>
      <div className="w-full h-[45px] pb-px border-b border-[#76809a] flex items-center justify-center shrink-0">
        <svg width="31" height="31" viewBox="0 0 31 31"><circle cx="15.500" cy="15.500" r="15" fill="#fff" /><rect x="7" y="7" width="17" height="17" rx="1" fill="none" stroke="#1d2438" strokeWidth="1.400" /><path d="M7 11h17" stroke="#1d2438" strokeWidth="1.400" /></svg>
      </div>
      <div className="w-full h-[43px] flex items-center justify-center shrink-0">
        <svg width="31" height="31" viewBox="0 0 31 31"><circle cx="15.500" cy="15.500" r="15" fill="#fff" /><path d="M12.500 14V3.500M15.500 12V2.500M18.500 12V3.500M22.500 5v11c0 3-2 5-5 6M12.500 14c-3-3-6-2-6 0 2 1 2 6 7 8" fill="none" stroke="#1d2438" strokeWidth="1.500" /><path d="M14.500 27v-9h-2.500l4.500-5.500 4.500 5.500h-2.500v9z" fill="#0aa454" /></svg>
      </div>
      <div className={bars} />
    </div>
  );
}

function BackWindow() {
  return (
    <div className="relative w-[167px] shrink-0 bg-[linear-gradient(to_bottom,#7ca4c0,#80a2be_50%,#8a9fb8)] flex">
      <div className="mt-px w-[158px] h-[1018px] rounded-r-[8px] bg-white flex flex-col overflow-hidden">
        <div className="h-[62px] shrink-0 border-b-2 border-[#f1f1f1]">
          <svg width="132" height="14" viewBox="0 0 132 14" className="mt-[12px] ml-[3px]" fill="none" stroke="#8f8f8f" strokeWidth="1.200"><path d="M1.500 6.500h12M119.500 1l11.500 12M131 1l-11.500 12" /><rect x="60.500" y="1" width="11" height="11.500" rx="1" /></svg>
        </div>
        <div className="flex-1 flex">
          <div className="w-[138px] bg-white" />
          <div className="w-[20px] bg-[#f0f0f0] flex items-end pb-[7px] pl-[4px]">
            <svg width="12" height="9" viewBox="0 0 12 9"><path d="M0 0h12L6 9z" fill="#868686" /></svg>
          </div>
        </div>
        <div className="h-[20px] shrink-0 bg-[#f0f0f0] flex justify-end items-center pr-[3px]">
          <svg width="12" height="12" viewBox="0 0 12 12" fill="#b5b5b5"><path d="M8 0h2.500v2.500H8zM8 4h2.500v2.500H8zM8 8h2.500v2.500H8zM4 4h2.500v2.500H4zM4 8h2.500v2.500H4zM0 8h2.500v2.500H0z" /></svg>
        </div>
      </div>
      <ToolStrip />
    </div>
  );
}

const apps: { icon: React.ReactNode; running?: boolean }[] = [
  { icon: <svg width="29" height="29" viewBox="0 0 29 29"><defs><linearGradient id="win" x1="0" y1="0" x2="1" y2="1"><stop offset="0" stopColor="#4cc8fb" /><stop offset="0.600" stopColor="#0c7ad6" /></linearGradient></defs><path d="M0 0h14v14H0zM15 0h14v14H15zM0 15h14v14H0zM15 15h14v14H15z" fill="url(#win)" /></svg> },
  { icon: <svg width="28" height="29" viewBox="0 0 28 29" fill="none" stroke="#222"><circle cx="15" cy="12" r="10.500" strokeWidth="2.400" fill="#e2e8f5" /><path d="M7.500 20L1.500 27" strokeWidth="3.600" strokeLinecap="round" /></svg> },
  { icon: <svg width="30" height="29" viewBox="0 0 30 29"><path d="M0 8h23v20.500H0z" fill="#242424" /><path d="M8 0h22v20H8z" fill="#f1f1f1" /><path d="M8 8h15v12H8z" fill="#b9b9b9" /></svg> },
  { icon: <svg width="30" height="28" viewBox="0 0 30 28"><rect width="30" height="28" rx="1.500" fill="#0e5ea8" /><rect x="2.500" y="2.500" width="11.500" height="23" rx="1" fill="#f8f8f8" /><path d="M16 2.500h11.500V14H16z" fill="#6fd4fb" /><path d="M16 15h11.500v4.500H16z" fill="#2ba3f3" /><path d="M16 20.500h11.500v5H16z" fill="#0e80e4" /></svg> },
  { icon: <svg width="29" height="29" viewBox="0 0 29 29"><defs><linearGradient id="cht" x1="0" y1="0" x2="0.300" y2="1"><stop offset="0" stopColor="#84589c" /><stop offset="0.500" stopColor="#6a62c4" /><stop offset="1" stopColor="#4d4fc8" /></linearGradient></defs><path d="M14.500 0a14 14 0 1 1-6 27L0 28l2-6A14 14 0 0 1 14.500 0z" fill="url(#cht)" /><rect x="6.500" y="8.500" width="12" height="11.500" rx="2" fill="#fff" /><path d="M19.500 12.500l3.500-3v9.500l-3.500-3z" fill="#fff" /></svg> },
  { icon: <svg width="29" height="29" viewBox="0 0 29 29"><path d="M8 6V1.200h13V6" fill="none" stroke="#24b7ef" strokeWidth="2" /><path d="M0 4.500h29V25c0 3-1.500 4-4 4H4c-2.500 0-4-1-4-4z" fill="#174f8b" /><path d="M9 11h5v5H9z" fill="#f25022" /><path d="M15 11h5v5h-5z" fill="#7fba00" /><path d="M9 17h5v5H9z" fill="#00a4ef" /><path d="M15 17h5v5h-5z" fill="#ffb900" /></svg> },
  { icon: <svg width="18" height="30" viewBox="0 0 18 30"><rect width="18" height="30" rx="1" fill="#37bff3" /><path d="M0 0h18v4H0z" fill="#4fe3fb" /><path d="M0 14h18v8H0z" fill="#1b98e0" /><path d="M0 21h18v5H0z" fill="#0a6cc4" /><path d="M0 26h18v4H0z" fill="#164f8c" /><path d="M6 2h6" stroke="#14507c" /></svg> },
  { icon: <svg width="30" height="21" viewBox="0 0 30 21"><rect width="30" height="21" rx="4" fill="#f00" /><path d="M12 6l8 4.500-8 4.500z" fill="#fff" /></svg> },
  { icon: <svg width="30" height="28" viewBox="0 0 30 28"><path d="M0 9L15 0l15 9z" fill="#0a4f9a" /><path d="M3 8.500h24V18H3z" fill="#f4f4f4" /><path d="M0 8.500L15 18l15-9.500V28H0z" fill="#2aa5e8" /><path d="M15 18l15 10V8.500z" fill="#4ac4f6" /></svg> },
  { icon: <svg width="28" height="28" viewBox="0 0 28 28"><circle cx="14" cy="14" r="14" fill="#fdd04a" /><path d="M14 14L1.900 7A14 14 0 0 1 26.100 7H14z" fill="#db4437" /><path d="M14 14L1.900 7A14 14 0 0 0 14 28l6-10.500z" fill="#189c5b" /><path d="M14 7.500h12.400A14 14 0 0 1 14 28l6-10z" fill="#fdd04a" /><circle cx="14" cy="14" r="6.600" fill="#fff" /><circle cx="14" cy="14" r="5.200" fill="#4687f4" /></svg> },
  { icon: <Edge size={30} /> },
  { icon: <svg width="28" height="25" viewBox="0 0 28 25"><defs><linearGradient id="mon" x1="0" y1="0" x2="1" y2="1"><stop offset="0" stopColor="#35d8dc" /><stop offset="1" stopColor="#1668be" /></linearGradient></defs><path d="M.5.500h27v19H.5z" fill="url(#mon)" stroke="#5b7886" /><path d="M12 20h4v3h-4z" fill="#8a8a8a" /><path d="M8 23h12v2H8z" fill="#5b5b5b" /></svg> },
  { icon: <svg width="30" height="30" viewBox="0 0 30 30"><path d="M15 0l7 7-7 7-7-7z" fill="#ff7d7d" /><path d="M7 8l7 7-7 7-7-7z" fill="#80b3ff" /><path d="M23 8l7 7-7 7-7-7z" fill="#87d86b" /><path d="M15 16l7 7-7 7-7-7z" fill="#ffe680" /><path d="M11 5l9 9M15 9v10" stroke="#e3e8f4" strokeWidth="1.800" /><circle cx="15" cy="19.500" r="2.600" fill="#e3e8f4" /><circle cx="19.500" cy="15" r="2.600" fill="#e3e8f4" /><circle cx="15" cy="11" r="2.300" fill="#e3e8f4" /></svg> },
  { icon: <svg width="30" height="30" viewBox="0 0 30 30"><rect width="30" height="30" rx="2" fill="#474747" /><path d="M7 9l15-5v5l-9 3 9 3v6L7 26v-5l9-3-9-3z" fill="#ff9800" /></svg> },
  { icon: <PlusStack size={30} />, running: true },
  { icon: <svg width="30" height="30" viewBox="0 0 30 30"><path d="M22 0l8 3.500v23L22 30z" fill="#27a3f2" /><path d="M22 0v8L4 22l-3.500-3z" fill="#0d74be" /><path d="M22 30v-8L4 8 .5 11z" fill="#1688d4" /></svg> },
  { icon: <Flower size={31} />, running: true },
  { icon: <svg width="30" height="30" viewBox="0 0 30 30"><path d="M0 0h30v30H0z" fill="#0178d7" /><path d="M5 7h13l3 4v12H5z" fill="#f2f6e8" /><path d="M6 18l5-4 9 2v7H6z" fill="#43a81c" /><path d="M8 14l5-3 3 1-1 3H9z" fill="#a9c48e" stroke="#2a5a1a" strokeWidth="0.800" /><path d="M23 8L16 23" stroke="#e0a93a" strokeWidth="1.800" /></svg>, running: true },
];

function Taskbar() {
  return (
    <div className="h-[60px] shrink-0 flex items-center pl-[466px] text-[15.500px] text-[#1b1b1b] bg-[linear-gradient(to_right,#dfeef7,#e4eff8_26%,#d3e4fb_35%,#d8dcf4_42%,#d3e1fa_48%,#dfe7f3_60%,#dee2f3_68%,#e0e4f1_75%,#dfebf6_85%,#dcebf6)]">
      {apps.map((a, i) => (
        <div key={i} className="w-[55px] h-full shrink-0 flex flex-col items-center">
          <div className="h-[60px] shrink-0 flex items-center">{a.icon}</div>
          {a.running && <span className="mt-[-10px] w-[8px] h-[4px] shrink-0 rounded-full bg-[#7d828c]" />}
        </div>
      ))}
      <svg width="17" height="10" viewBox="0 0 17 10" className="ml-[76px] shrink-0"><path d="M1 9l7.500-8L16 9" fill="none" stroke="#222" strokeWidth="1.600" /></svg>
      <svg width="21" height="16" viewBox="0 0 21 16" className="ml-[11px] shrink-0"><path d="M5 14c-6 0-5-8 0-8 1-6 10-6 11-1 6 0 6 9 0 9z" fill="#a5a8ac" stroke="#222" strokeWidth="1.300" /><path d="M2 0l17 16" stroke="#e3edf6" strokeWidth="3.500" /><path d="M2 0l17 16" stroke="#222" strokeWidth="1.500" /></svg>
      <svg width="15" height="21" viewBox="0 0 15 21" className="ml-[17px] shrink-0" fill="none" stroke="#1d4fa3" strokeWidth="1.500"><rect x="4.500" y="1" width="6" height="12" rx="3" fill="#cfe0f5" /><path d="M1 10c0 8 13 8 13 0M7.500 16v4.500" /></svg>
      <div className="ml-[27px] w-[28px] shrink-0 flex flex-col items-center leading-5"><Fit w={28}>ENG</Fit><Fit w={14}>IN</Fit></div>
      <svg width="21" height="16" viewBox="0 0 21 16" className="ml-[23px] shrink-0" fill="none" stroke="#222" strokeWidth="1.500"><path d="M1 5.500c5.500-6 13.500-6 19 0M4 8.500c4-4 9-4 13 0M7 11.500c2.500-2 4.500-2 7 0" /><circle cx="10.500" cy="13.700" r="1.700" fill="#222" stroke="none" /></svg>
      <div className="ml-[8px]"><Speaker color="#222" faint="#b2bac3" /></div>
      <svg width="20" height="13" viewBox="0 0 20 13" className="ml-[10px] shrink-0"><rect x="0.800" y="0.800" width="16.400" height="11.400" rx="2.500" fill="none" stroke="#222" strokeWidth="1.500" /><path d="M3 3h4v7H3z" fill="#222" /><path d="M19 4.500v4" stroke="#222" strokeWidth="1.800" /></svg>
      <div className="ml-[20px] w-[75px] shrink-0 flex flex-col items-end leading-5"><Fit w={36}>08:53</Fit><Fit w={75}>04-01-2022</Fit></div>
      <svg width="17" height="18" viewBox="0 0 17 18" className="ml-[12px] shrink-0"><path d="M8 1c8 1 10 10 5 14C9 18.500 3 17 1 13.500 7 13 10 7 8 1z" fill="none" stroke="#222" strokeWidth="1.500" strokeLinejoin="round" /></svg>
    </div>
  );
}

export default function App() {
  return (
    <div className="w-[1920px] h-[1080px] overflow-hidden flex flex-col font-['Open_Sans','Noto_Sans',sans-serif]">
      <div className="h-[1020px] shrink-0 flex">
        <SharedWindow />
        <BackWindow />
      </div>
      <Taskbar />
    </div>
  );
}
